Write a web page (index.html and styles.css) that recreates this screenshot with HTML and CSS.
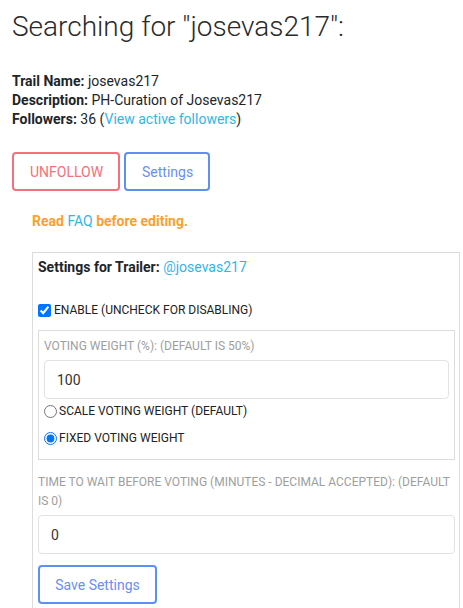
FILE: index.html
```html
<!DOCTYPE html>
<html>
<head>
<meta charset="utf-8">
<link rel="stylesheet" href="styles.css">
</head>
<body>
<div class="page">
  <h1 class="title">Searching for "josevas217":</h1>
  <div class="info">
    <div><b>Trail Name:</b> josevas217</div>
    <div><b>Description:</b> PH-Curation of Josevas217</div>
    <div><b>Followers:</b> 36 (<a class="link" href="#">View active followers</a>)</div>
  </div>
  <div class="actions">
    <button class="btn btn-red">UNFOLLOW</button>
    <button class="btn btn-blue">Settings</button>
  </div>
  <div class="settings">
    <p class="warn">Read <a class="link faq" href="#">FAQ</a> before editing.</p>
    <div class="box">
      <div class="box-title"><b>Settings for Trailer:</b> <a class="link" href="#">@josevas217</a></div>
      <label class="check-row"><input type="checkbox" checked> ENABLE (UNCHECK FOR DISABLING)</label>
      <div class="inner">
        <div class="label">VOTING WEIGHT (%): (DEFAULT IS 50%)</div>
        <input class="field" type="text" value="100">
        <label class="radio-row"><input type="radio" name="w"> SCALE VOTING WEIGHT (DEFAULT)</label>
        <label class="radio-row r2"><input type="radio" name="w" checked> FIXED VOTING WEIGHT</label>
      </div>
      <div class="label wait">TIME TO WAIT BEFORE VOTING (MINUTES - DECIMAL ACCEPTED): (DEFAULT IS 0)</div>
      <input class="field" type="text" value="0">
      <button class="btn btn-blue save">Save Settings</button>
    </div>
  </div>
</div>
</body>
</html>
```
FILE: styles.css
```css
html, body {
  margin: 0;
  padding: 0;
  background: #fff;
}
body {
  font-family: Roboto, "Liberation Sans", sans-serif;
  font-size: 14px;
  color: #212529;
}
.page {
  padding: 0 0 0 12px;
}
.title {
  font-size: 28px;
  font-weight: 300;
  line-height: 34px;
  margin: 10px 0 0 0;
  color: #2a2a2a;
}
.info {
  margin-top: 28px;
  line-height: 19px;
}
.info b {
  font-weight: 700;
}
.link {
  color: #33b5e5;
  text-decoration: none;
}
.actions {
  margin-top: 23px;
  display: flex;
  gap: 4px;
}
.btn {
  font-family: Roboto, "Liberation Sans", sans-serif;
  font-size: 14px;
  background: #fff;
  border: 2px solid;
  border-radius: 4px;
  height: 39px;
  padding: 0 16px;
  cursor: pointer;
}
.btn-red {
  border-color: #f2717a;
  color: #f2717a;
  width: 108px;
}
.btn-blue {
  border-color: #5f8ff2;
  color: #6a8ff0;
}
.actions .btn-blue {
  width: 86px;
}
.settings {
  padding-left: 20px;
}
.warn {
  margin: 21px 0 0 0;
  line-height: 19px;
  color: #f8a133;
  font-weight: 700;
}
.faq {
  font-weight: 400;
}
.box {
  margin-top: 21px;
  border: 1px solid #dcdcdc;
  border-bottom: none;
  width: 428px;
  box-sizing: border-box;
  padding: 5px 5px 5px 5px;
}
.box-title {
  line-height: 19px;
}
.check-row {
  display: flex;
  align-items: center;
  gap: 3px;
  margin-top: 24px;
  font-size: 12px;
  line-height: 18px;
  color: #222;
}
.check-row input {
  margin: 0;
  width: 13px;
  height: 13px;
}
.inner {
  margin-top: 11px;
  border: 1px solid #dcdcdc;
  padding: 5px 5px 14px 5px;
  width: 417px;
  box-sizing: border-box;
}
.label {
  font-size: 12px;
  line-height: 20px;
  color: #9e9e9e;
}
.field {
  display: block;
  width: 100%;
  box-sizing: border-box;
  height: 39px;
  margin-top: 4px;
  border: 1px solid #e2e2e2;
  border-radius: 4px;
  padding: 0 12px;
  font-family: Roboto, "Liberation Sans", sans-serif;
  font-size: 14px;
  color: #333;
  outline: none;
}
.inner .field {
  width: 405px;
}
.radio-row {
  display: flex;
  align-items: center;
  gap: 2px;
  margin-top: 5px;
  font-size: 12px;
  line-height: 14px;
  color: #222;
}
.radio-row input {
  margin: 0;
  width: 13px;
  height: 13px;
}
.radio-row.r2 {
  margin-top: 13px;
}
.wait {
  margin-top: 13px;
  line-height: 19px;
}
.box > .field {
  width: 417px;
  margin-top: 4px;
}
.save {
  display: block;
  margin-top: 11px;
  width: 119px;
  padding: 0;
}
```
